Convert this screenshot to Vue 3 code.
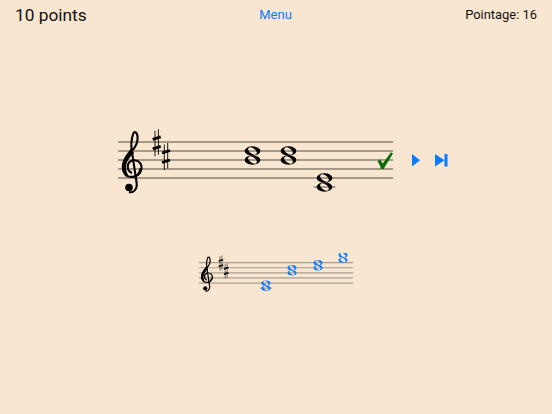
<script setup>
// all staff coordinates are in "big staff" units, a line gap is 9
const lines = [17, 26, 35, 44, 53]

const staves = [
  { id: 'exercise', width: 275, scale: 1, color: '#000', lineColor: '#8a7f70', lineWidth: 1.4, check: true, chords: [{ x: 134.5, top: 1 }, { x: 170.5, top: 1 }, { x: 206.5, top: 4 }] },
  { id: 'answer', width: 272, scale: 0.567, color: '#0a7aff', lineColor: '#a99e8e', lineWidth: 2.1, check: false, chords: [{ x: 118, top: 4 }, { x: 164, top: 1 }, { x: 210, top: 0 }, { x: 254, top: -1.5 }] }
]

const sharps = [{ x: 38.7, y: 17.8 }, { x: 48, y: 31.5 }]

const noteY = (pos) => 17 + pos * 9
</script>

<template>
  <div class="page">
    <header class="top">
      <span class="score">10 points</span>
      <a class="menu">Menu</a>
      <span class="total">Pointage: 16</span>
    </header>

    <section v-for="staff in staves" :key="staff.id" class="row" :class="staff.id">
      <svg :width="staff.width * staff.scale" :height="80 * staff.scale" :viewBox="`0 0 ${staff.width} 80`">
        <line v-for="y in lines" :key="y" x1="0" :x2="staff.width" :y1="y" :y2="y" :stroke="staff.lineColor" :stroke-width="staff.lineWidth" />

        <!-- clef -->
        <g transform="translate(-118 -125)">
          <path d="M132 173C126.500 171 126 162 132.500 160.500C139 159 143 165 141 170.500C138 177.500 128 179 124.500 173.500C120 166.500 125 158 130.500 152.500C135 148 138.500 143 137.500 136.500C137 132 134 130.500 133 134.500C131 140 131 146 132 152L136.500 182C137.800 190 133 193 129 192" fill="none" stroke="#000" stroke-width="2.100" />
          <path d="M122 167C122 159 127 153.500 131 148.500L134 153C129 158 126.500 161 126 167C126 171 127 174 129 176C125 175 122 172 122 167ZM142 169C141.500 175 136 178.500 130.500 178C135 176.500 138.500 174 139.500 168Z" fill="#000" />
          <circle cx="129" cy="187.500" r="3.800" fill="#000" />
        </g>

        <!-- key signature: F sharp and C sharp -->
        <g v-for="s in sharps" :key="s.x" :transform="`translate(${s.x} ${s.y})`" stroke="#000">
          <path d="M-1.700 -12V13.500M1.700 -13.500V12" stroke-width="0.900" fill="none" />
          <path d="M-4 -3.500L4 -6M-4 6L4 3.500" stroke-width="2.800" fill="none" />
        </g>

        <!-- chords -->
        <g v-for="chord in staff.chords" :key="chord.x" :transform="`translate(${chord.x} 0)`">
          <line v-if="chord.top === 4" x1="-11" x2="11" :y1="noteY(5)" :y2="noteY(5)" :stroke="staff.lineColor" :stroke-width="staff.lineWidth" />
          <path
            v-for="p in [chord.top, chord.top + 1]"
            :key="p"
            :transform="`translate(0 ${noteY(p)})`"
            d="M-7.900 0A7.900 4.700 0 1 0 7.900 0A7.900 4.700 0 1 0 -7.900 0ZM-4 -2.800A4.900 2.500 35 1 0 4 2.800A4.900 2.500 35 1 0 -4 -2.800Z"
            :fill="staff.color"
            fill-rule="evenodd"
          />
        </g>

        <path v-if="staff.check" d="M259.500 36.500L261.800 34.300L264.800 38.500L273 27.300L275 28.500L265.500 44L263 44C262.500 41.500 261.500 39 259.500 36.500Z" fill="#0b6b0b" />
      </svg>

      <div v-if="staff.check" class="controls">
        <svg width="8" height="12.500" viewBox="0 0 8 12.500"><path d="M0 0L8 6.250L0 12.500Z" fill="#0a7aff" /></svg>
        <svg width="12.500" height="12.500" viewBox="0 0 12.500 12.500"><path d="M0 0L9.500 6.250L0 12.500ZM9.500 0H12.500V12.500H9.500Z" fill="#0a7aff" /></svg>
      </div>
    </section>
  </div>
</template>

<style scoped>
.page {
  height: 414px;
  overflow: hidden;
  background: #f9e6d0;
  font-family: Roboto, "Liberation Sans", sans-serif;
  color: #111;
}

.top {
  display: grid;
  grid-template-columns: 1fr auto 1fr;
  align-items: center;
  height: 29px;
  padding: 0 15px;
}

.score {
  font-size: 17.300px;
}

.menu {
  font-size: 13px;
  color: #0a7aff;
  margin-left: -1px;
}

.total {
  font-size: 12.900px;
  text-align: right;
}

.row {
  display: flex;
}

.row svg {
  display: block;
}

.exercise {
  margin: 96px 0 0 118px;
}

.answer {
  margin: 48px 0 0 199px;
}

.controls {
  display: flex;
  align-items: center;
  gap: 15px;
  height: 71px;
  margin-left: 19px;
}
</style>
